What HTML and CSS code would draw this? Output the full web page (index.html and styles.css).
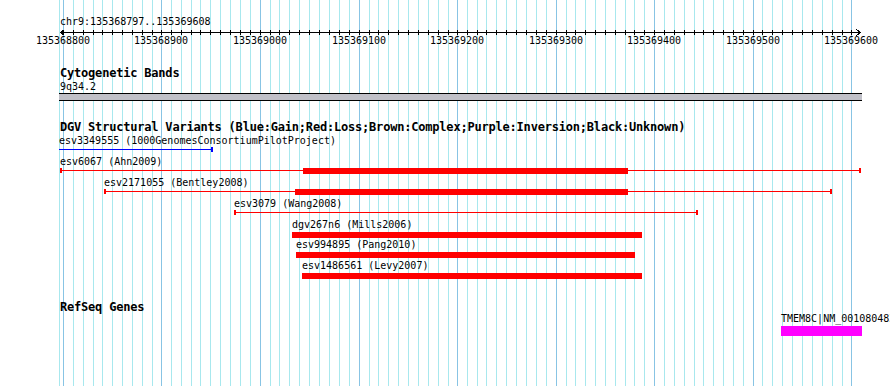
FILE: index.html
```html
<!DOCTYPE html>
<html>
    <head>
        <title>chr9:135368797..135369608</title>
        <meta charset="utf-8">
        <link rel="stylesheet" href="styles.css">
    </head>
    <body>
        <div class="browser">
            <!-- grid lines every 10 bp, darker every 100 bp -->
            <svg class="grid" width="890" height="386">
                <path class="minor" d="M59.5 0v386M73.5 0v386M83.5 0v386M93.5 0v386M102.5 0v386M112.5 0v386M122.5 0v386M132.5 0v386M142.5 0v386M152.5 0v386M171.5 0v386M181.5 0v386M191.5 0v386M200.5 0v386M210.5 0v386M220.5 0v386M230.5 0v386M240.5 0v386M250.5 0v386M270.5 0v386M279.5 0v386M289.5 0v386M299.5 0v386M309.5 0v386M319.5 0v386M329.5 0v386M339.5 0v386M349.5 0v386M369.5 0v386M378.5 0v386M388.5 0v386M398.5 0v386M408.5 0v386M418.5 0v386M428.5 0v386M438.5 0v386M448.5 0v386M467.5 0v386M477.5 0v386M486.5 0v386M496.5 0v386M506.5 0v386M516.5 0v386M526.5 0v386M536.5 0v386M546.5 0v386M566.5 0v386M575.5 0v386M585.5 0v386M595.5 0v386M605.5 0v386M615.5 0v386M625.5 0v386M634.5 0v386M644.5 0v386M664.5 0v386M674.5 0v386M684.5 0v386M694.5 0v386M703.5 0v386M713.5 0v386M723.5 0v386M733.5 0v386M743.5 0v386M762.5 0v386M772.5 0v386M782.5 0v386M792.5 0v386M802.5 0v386M812.5 0v386M822.5 0v386M832.5 0v386M842.5 0v386"/>
                <path class="major" d="M63.5 0v386M161.5 0v386M260.5 0v386M359.5 0v386M457.5 0v386M556.5 0v386M654.5 0v386M753.5 0v386M851.5 0v386"/>
            </svg>

            <section class="track ruler">
                <div class="ruler-title">chr9:135368797..135369608</div>
                <svg class="ruler-axis" width="890" height="20">
                    <path d="M60 4.5H861M64.5 1.5L60.5 4.5L64.5 7.5M856.5 1.5L860.5 4.5L856.5 7.5"/>
                    <path d="M63.5 2v5M73.5 2v5M83.5 2v5M93.5 2v5M102.5 2v5M112.5 2v5M122.5 2v5M132.5 2v5M142.5 2v5M152.5 2v5M161.5 2v5M171.5 2v5M181.5 2v5M191.5 2v5M200.5 2v5M210.5 2v5M220.5 2v5M230.5 2v5M240.5 2v5M250.5 2v5M260.5 2v5M270.5 2v5M279.5 2v5M289.5 2v5M299.5 2v5M309.5 2v5M319.5 2v5M329.5 2v5M339.5 2v5M349.5 2v5M359.5 2v5M369.5 2v5M378.5 2v5M388.5 2v5M398.5 2v5M408.5 2v5M418.5 2v5M428.5 2v5M438.5 2v5M448.5 2v5M457.5 2v5M467.5 2v5M477.5 2v5M486.5 2v5M496.5 2v5M506.5 2v5M516.5 2v5M526.5 2v5M536.5 2v5M546.5 2v5M556.5 2v5M566.5 2v5M575.5 2v5M585.5 2v5M595.5 2v5M605.5 2v5M615.5 2v5M625.5 2v5M634.5 2v5M644.5 2v5M654.5 2v5M664.5 2v5M674.5 2v5M684.5 2v5M694.5 2v5M703.5 2v5M713.5 2v5M723.5 2v5M733.5 2v5M743.5 2v5M753.5 2v5M762.5 2v5M772.5 2v5M782.5 2v5M792.5 2v5M802.5 2v5M812.5 2v5M822.5 2v5M832.5 2v5M842.5 2v5M851.5 2v5"/>
                    <text x="63" y="16">135368800</text>
                    <text x="161" y="16">135368900</text>
                    <text x="260" y="16">135369000</text>
                    <text x="359" y="16">135369100</text>
                    <text x="457" y="16">135369200</text>
                    <text x="556" y="16">135369300</text>
                    <text x="654" y="16">135369400</text>
                    <text x="753" y="16">135369500</text>
                    <text x="851" y="16">135369600</text>
                </svg>
            </section>

            <section class="track cyto">
                <h2 class="track-name">Cytogenetic Bands</h2>
                <div class="band-name">9q34.2</div>
                <div class="band-bar"></div>
            </section>

            <section class="track dgv">
                <h2 class="track-name">DGV Structural Variants (Blue:Gain;Red:Loss;Brown:Complex;Purple:Inversion;Black:Unknown)</h2>
                <div class="lane dgv-lane">
                    <div class="sv gain" style="top:0;left:59px;width:154px">
                        <span class="sv-label">esv3349555 (1000GenomesConsortiumPilotProject)</span>
                        <div class="sv-span open-left"></div>
                    </div>
                    <div class="sv loss" style="top:21px;left:60px;width:801px">
                        <span class="sv-label">esv6067 (Ahn2009)</span>
                        <div class="sv-span">
                            <div class="sv-core" style="left:241px;width:325px"></div>
                        </div>
                    </div>
                    <div class="sv loss" style="top:42px;left:104px;width:728px">
                        <span class="sv-label">esv2171055 (Bentley2008)</span>
                        <div class="sv-span">
                            <div class="sv-core" style="left:189px;width:333px"></div>
                        </div>
                    </div>
                    <div class="sv loss" style="top:63px;left:234px;width:464px">
                        <span class="sv-label">esv3079 (Wang2008)</span>
                        <div class="sv-span"></div>
                    </div>
                    <div class="sv loss" style="top:84px;left:292px;width:350px">
                        <span class="sv-label">dgv267n6 (Mills2006)</span>
                        <div class="sv-bar"></div>
                    </div>
                    <div class="sv loss" style="top:104px;left:296px;width:339px">
                        <span class="sv-label">esv994895 (Pang2010)</span>
                        <div class="sv-bar"></div>
                    </div>
                    <div class="sv loss" style="top:125px;left:302px;width:340px">
                        <span class="sv-label">esv1486561 (Levy2007)</span>
                        <div class="sv-bar"></div>
                    </div>
                </div>
            </section>

            <section class="track refseq">
                <h2 class="track-name">RefSeq Genes</h2>
                <div class="lane gene-lane">
                    <div class="gene" style="top:-2px;left:781px;width:81px">
                        <span class="gene-label">TMEM8C|NM_001080483</span>
                        <div class="gene-bar"></div>
                    </div>
                </div>
            </section>
        </div>
    </body>
</html>
```

FILE: styles.css
```css
* {
    box-sizing: border-box;
}

html, body {
    margin: 0;
    background: #fff;
}

body {
    width: 890px;
    height: 386px;
    overflow: hidden;
    font: 10px/13px "DejaVu Sans Mono", monospace;
    color: #000;
}

.browser {
    position: relative;
    z-index: 0;
    width: 890px;
    height: 386px;
    background: #fff;
}

.grid {
    position: absolute;
    top: 0;
    left: 0;
    z-index: -1;
    shape-rendering: crispEdges;
}

.grid .minor {
    stroke: #a8e8ee;
}

.grid .major {
    stroke: #88c4e4;
}

/* ruler */

.ruler {
    height: 48px;
}

.ruler-title {
    padding: 15px 0 0 60px;
    white-space: nowrap;
}

.ruler-axis {
    display: block;
}

.ruler-axis path {
    fill: none;
    stroke: #000;
    shape-rendering: crispEdges;
}

.ruler-axis text {
    font-family: "DejaVu Sans Mono", monospace;
    font-size: 10px;
    text-anchor: middle;
    fill: #000;
}

/* tracks */

.track-name {
    margin: 0 0 0 60px;
    font: bold 12px/13px "DejaVu Sans Mono", monospace;
    letter-spacing: -0.2px;
    white-space: nowrap;
}

.cyto .track-name {
    margin-top: 19px;
}

.band-name {
    margin-left: 60px;
}

.band-bar {
    margin-left: 59px;
    width: 803px;
    height: 8px;
    background: #c0c0c8;
    border-top: 1px solid #000;
    border-bottom: 1px solid #000;
}

.dgv .track-name {
    margin-top: 20px;
}

.refseq .track-name {
    margin-top: 22px;
}

.lane {
    position: relative;
}

.dgv-lane {
    height: 145px;
}

.gene-lane {
    height: 72px;
}

/* features */

.sv, .gene {
    position: absolute;
    white-space: nowrap;
}

.sv-label, .gene-label {
    display: block;
}

.sv-span {
    position: relative;
    height: 5px;
    border-left: 2px solid;
    border-right: 2px solid;
}

.sv-span::before {
    content: "";
    position: absolute;
    left: 0;
    right: 0;
    top: 2px;
    height: 1px;
    background: currentColor;
}

.open-left {
    border-left: 0;
}

.sv-core {
    position: absolute;
    top: 0;
    height: 6px;
    background: currentColor;
}

.sv-bar {
    margin-top: 1px;
    height: 6px;
    background: #f00;
}

.gain .sv-span {
    color: #00f;
}

.loss .sv-span {
    color: #f00;
}

.gene-bar {
    margin-top: 1px;
    height: 10px;
    background: #f0f;
}
```
